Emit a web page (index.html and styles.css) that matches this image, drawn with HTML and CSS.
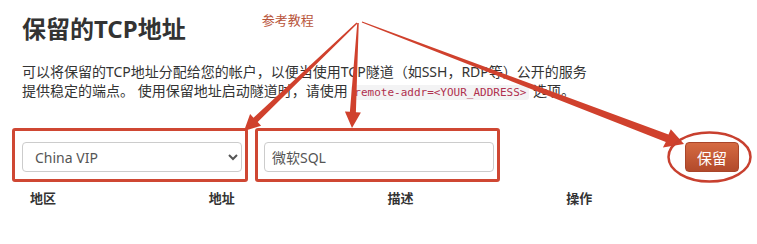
FILE: index.html
```html
<!DOCTYPE html>
<html lang="zh-CN">

<head>
    <meta charset="UTF-8">
    <meta name="viewport" content="width=device-width, initial-scale=1.0">
    <title>保留的TCP地址</title>
    <link rel="stylesheet" href="styles.css">
</head>

<body>
    <div class="page">
        <div class="title-row">
            <h2>保留的TCP地址</h2>
            <span class="note">参考教程</span>
        </div>

        <p class="intro">可以将保留的TCP地址分配给您的帐户，以便当使用TCP隧道（如SSH，RDP等）公开的服务<br>提供稳定的端点。 使用保留地址启动隧道时，请使用 <code>remote-addr=&lt;YOUR_ADDRESS&gt;</code> 选项。</p>

        <div class="form-row">
            <div class="mark mark-region">
                <select class="field">
                    <option>China VIP</option>
                </select>
            </div>
            <div class="mark mark-desc">
                <input class="field" type="text" value="微软SQL">
            </div>
            <div class="action">
                <button class="reserve">保留</button>
            </div>
        </div>

        <table class="list">
            <tr>
                <th>地区</th>
                <th>地址</th>
                <th>描述</th>
                <th>操作</th>
            </tr>
        </table>
    </div>

    <!-- 标注箭头 -->
    <svg class="arrows" width="757" height="244" viewBox="0 0 757 244">
        <polygon points="356.5,22.5 253.5,117.7 250.1,114.1 244,131 261.1,125.7 257.7,122.1 357.5,23.5" />
        <polygon points="357.25,23 349.9,111.8 344.9,111.5 352,128 360.9,112.5 355.9,112.2 358.75,23" />
        <polygon points="362.2,21.4 668.5,134.6 670.8,129.3 684,144 662.9,147.4 665.8,141.9 361.8,22.6" />
        <ellipse cx="709.5" cy="157" rx="41" ry="24.5" fill="none" stroke-width="2.5" />
    </svg>
</body>

</html>
```

FILE: styles.css
```css
body {
    margin: 0;
    font-family: "Noto Sans", "Noto Sans CJK SC", sans-serif;
    color: #333;
    background-color: #fff;
}

.page {
    padding: 0 20px 0 22px;
}

.title-row {
    display: flex;
    align-items: flex-start;
    height: 50px;
}

.title-row h2 {
    margin: 11px 0 0;
    font-size: 24px;
    line-height: 36px;
    font-weight: bold;
    color: #333;
}

.note {
    margin: 10px 0 0 76px;
    font-size: 13px;
    line-height: 20px;
    color: #b8543a;
}

.intro {
    margin: 12px 0 0;
    font-size: 14px;
    line-height: 19px;
}

.intro code {
    font-family: "DejaVu Sans Mono", monospace;
    font-size: 11px;
    color: #b0304e;
    background-color: #f3f3f4;
    padding: 1px 3px;
    border-radius: 3px;
}

.form-row {
    display: flex;
    align-items: flex-start;
    margin: 26px 0 0 -10px;
}

.mark {
    border: 3px solid #cf4733;
    border-radius: 3px;
    padding: 11px 3px 7px 7px;
}

.mark-desc {
    margin-left: 7px;
    padding-left: 6px;
}

.field {
    display: block;
    box-sizing: border-box;
    height: 30px;
    border: 1px solid #ccc;
    border-radius: 4px;
    background-color: #fff;
    font-family: "Noto Sans", "Noto Sans CJK SC", sans-serif;
    font-size: 14px;
    color: #555;
    outline: none;
}

select.field {
    width: 220px;
    padding: 0 8px;
}

input.field {
    width: 230px;
    padding: 0 7px;
}

.action {
    flex: 1;
    display: flex;
    justify-content: flex-end;
    padding-top: 14px;
    margin-right: -2px;
}

.reserve {
    width: 54px;
    height: 30px;
    border: 1px solid #a9452a;
    border-radius: 4px;
    background: linear-gradient(#d56a42, #b24a2b);
    color: #fff;
    font-family: "Noto Sans CJK SC", sans-serif;
    font-size: 15px;
    cursor: pointer;
}

.list {
    width: 100%;
    border-collapse: collapse;
    table-layout: fixed;
    margin-top: -2px;
}

.list th {
    text-align: left;
    padding: 8px;
    font-size: 13px;
    line-height: 20px;
    font-weight: bold;
    color: #333;
}

.arrows {
    position: absolute;
    top: 0;
    left: 0;
    pointer-events: none;
}

.arrows polygon {
    fill: #d0412d;
}

.arrows ellipse {
    stroke: #c8402f;
}
```
